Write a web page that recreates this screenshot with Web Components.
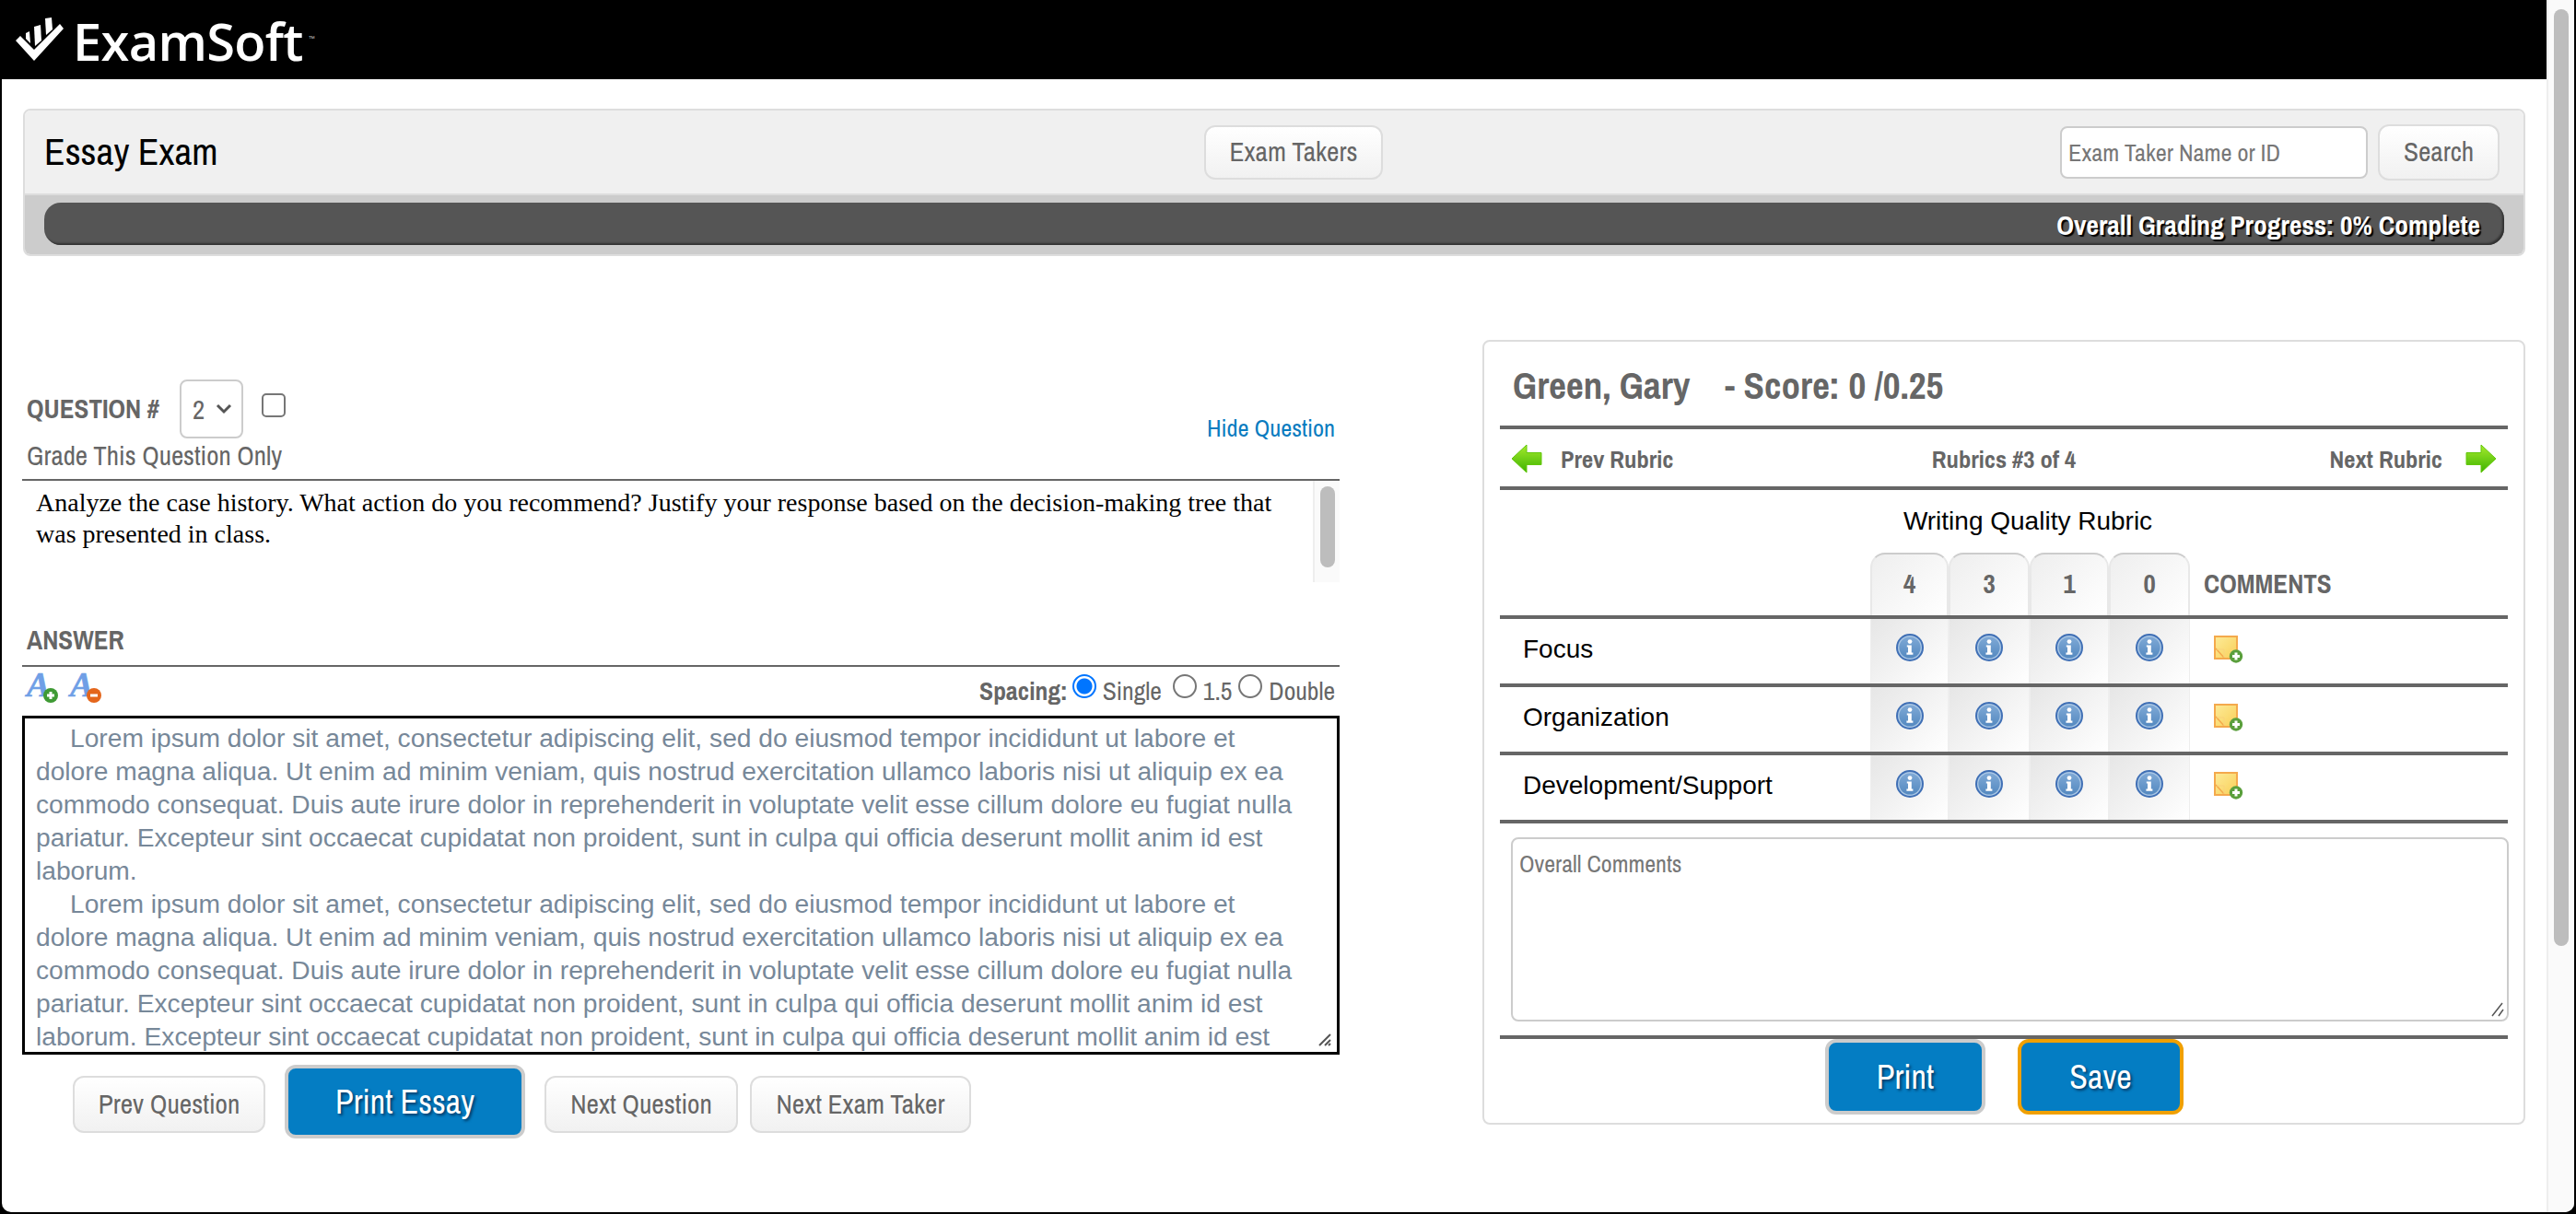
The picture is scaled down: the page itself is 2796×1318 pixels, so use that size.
<!DOCTYPE html>
<html>
<head>
<meta charset="utf-8">
<title>ExamSoft</title>
<style>
  :root {
    --narrow: "Archivo Narrow", "Liberation Sans", sans-serif;
    --sans: "Liberation Sans", Arial, sans-serif;
    --serif: "Liberation Serif", "Times New Roman", serif;
    --rule: #666;
  }
  html, body { margin: 0; padding: 0; overflow: hidden; background: #000; }
</style>
</head>
<body>
<es-app>
  <es-header></es-header>
  <es-exam-bar></es-exam-bar>
  <es-columns>
    <es-question slot="left"></es-question>
    <es-rubric slot="right"></es-rubric>
  </es-columns>
</es-app>

<script>
// small helper, every element here is the same shape
function define(name, css, html) {
  customElements.define(name, class extends HTMLElement {
    constructor() {
      super()
      const root = this.attachShadow({mode: 'open'})
      root.innerHTML = `<style>${css}</style>${typeof html == 'function' ? html(this) : html}`
    }
  })
}

const ICON_INFO = `
  <svg width="32" height="32" viewBox="0 0 32 32">
    <defs><linearGradient id="ib" x1="0" y1="0" x2="0" y2="1">
      <stop offset="0" stop-color="#7fa9d6"/><stop offset="1" stop-color="#5489c0"/>
    </linearGradient></defs>
    <circle cx="16" cy="16" r="15" fill="#3f6fb5"/>
    <circle cx="16" cy="16" r="13" fill="#a9c6e4"/>
    <circle cx="16" cy="16" r="11.6" fill="url(#ib)"/>
    <circle cx="16" cy="9.6" r="2.4" fill="#fff"/>
    <path d="M12.8 13.4h5v8.2h1.6v2.2h-7v-2.2h1.6v-6h-1.2z" fill="#fff"/>
  </svg>`

const ICON_NOTE = `
  <svg width="32" height="30" viewBox="0 0 32 30">
    <defs><linearGradient id="nb" x1="0" y1="0" x2="1" y2="1">
      <stop offset="0" stop-color="#fdeb98"/><stop offset="1" stop-color="#f8cf58"/>
    </linearGradient></defs>
    <rect x="1" y="1" width="24" height="24" fill="url(#nb)" stroke="#f4a94c" stroke-width="2"/>
    <path d="M2 14l9 10" fill="none" stroke="#f4a94c" stroke-width="1.5"/>
    <path d="M11 24v-9H3" fill="none" stroke="#f9d27a" stroke-width="1"/>
    <circle cx="24" cy="22.5" r="7.2" fill="#5a9f3c"/>
    <path d="M20 22.5h8M24 18.5v8" stroke="#fff" stroke-width="3"/>
  </svg>`

function arrowIcon(flip) {
  return `
  <svg width="34" height="32" viewBox="0 0 34 32" style="${flip ? 'transform:scaleX(-1)' : ''}">
    <defs><linearGradient id="ar" x1="0" y1="0" x2="0" y2="1">
      <stop offset="0" stop-color="#a6ea2c"/><stop offset="1" stop-color="#3db300"/>
    </linearGradient></defs>
    <path d="M1 16L17 1v8.5h16v13H17V31z" fill="url(#ar)" stroke="#62c70a" stroke-width="1"/>
  </svg>`
}

// oversized viewBox so the A keeps its whole line box, the spare part is empty
function fontIcon(badge, sign) {
  return `
  <svg width="44" height="48" viewBox="-5 -14 44 48">
    <text x="-2" y="24" font-family="Liberation Serif, serif" font-style="italic" font-weight="700"
      font-size="38" fill="#6f9fe6" stroke="#6f9fe6" stroke-width="0.6">A</text>
    <circle cx="24" cy="23" r="8" fill="${badge}"/>
    <path d="${sign}" stroke="#fff" stroke-width="3"/>
  </svg>`
}

define('es-app', `
  :host { display: block; width: 100vw; height: 100vh; box-sizing: border-box; padding: 0 2px 2px; background: #000; }
  .frame { display: flex; height: 100%; background: #fff; border-radius: 0 0 10px 10px; overflow: hidden; }
  .main { flex: 1; min-width: 0; }
`, `
  <div class="frame">
    <div class="main"><slot></slot></div>
    <es-scrollbar style="--track:30px;--thumb:16px;--top:10px;--len:1017px"></es-scrollbar>
  </div>
`)

define('es-scrollbar', `
  :host { display: block; flex: 0 0 var(--track); width: var(--track); box-sizing: border-box;
    background: #fafafa; border-left: 2px solid #eee; padding-top: var(--top); }
  div { width: var(--thumb); height: var(--len); margin-left: 6px; border-radius: 8px; background: #bdbdbd; }
`, `<div></div>`)

define('es-header', `
  :host { display: flex; align-items: center; height: 86px; background: #000; color: #fff; box-sizing: border-box; padding-left: 15px; }
  svg { display: block; flex: none; }
  span { font: 600 56px/86px "Open Sans", sans-serif; margin-left: 6px; letter-spacing: -0.7px; position: relative; top: 1px; }
  sup { font: 7px/1 "Liberation Sans", sans-serif; color: #ccc; margin: 0 0 0 6px; vertical-align: 22px; }
`, `
  <svg width="56" height="52" viewBox="17 18 56 52">
    <g fill="#fff">
      <path d="M17 45l5-5 15 15 28-28 4 5-32 35z"/>
      <path d="M28 37l4-2 1 13-5-5z"/>
      <path d="M37 30l7-2 1 17-7 6z"/>
      <path d="M49 21l7-1 1 13-7 6z"/>
    </g>
  </svg>
  <span>ExamSoft<sup>™</sup></span>
`)

define('es-button', `
  :host { display: inline-block; }
  button { display: block; box-sizing: border-box; width: var(--w); height: var(--h); padding: 0;
    font: 29.3px/1 var(--narrow); color: #666; cursor: pointer;
    background: linear-gradient(#fff, #f1f1f1); border: 2px solid #ddd; border-radius: 12px; }
  :host([primary]) button { background: #047dc3; border: 4px solid #ccc; color: #fff; font-size: 36px;
    text-shadow: 2px 2px 3px #023a66; border-radius: 12px; }
  :host([accent]) button { border-color: #f0a000; }
`, `<button><slot></slot></button>`)

define('es-exam-bar', `
  :host { display: block; margin: 32px 23px 0; height: 160px; box-sizing: border-box;
    border: 2px solid #ddd; border-radius: 8px; overflow: hidden; }
  .top { display: flex; align-items: center; height: 90px; background: #f0f0f0; border-bottom: 2px solid #ddd;
    padding: 0 26px 0 21px; }
  h1 { flex: 0 0 1259px; margin: 0; font: 400 41.4px/1 var(--narrow); color: #000; }
  .search { margin-left: auto; display: flex; align-items: center; gap: 11px; }
  .input { box-sizing: border-box; width: 334px; height: 57px; background: #fff; border: 2px solid #ccc; border-radius: 8px;
    font: 26.3px/53px var(--narrow); color: #777; padding-left: 7px; }
  .bottom { background: #ccc; height: 64px; box-sizing: border-box; padding: 8px 21px 10px; }
  .bar { height: 46px; box-sizing: border-box; border-radius: 18px; background: #555; box-shadow: inset -2px -2px 2px #333;
    font: 700 29.5px/48px var(--narrow); color: #fff; text-align: right; padding-right: 26px; text-shadow: 2px 2px 1px #000; }
`, `
  <div class="top">
    <h1>Essay Exam</h1>
    <es-button style="--w:194px;--h:59px">Exam Takers</es-button>
    <div class="search">
      <div class="input">Exam Taker Name or ID</div>
      <es-button style="--w:132px;--h:61px">Search</es-button>
    </div>
  </div>
  <div class="bottom"><div class="bar">Overall Grading Progress: 0% Complete</div></div>
`)

define('es-columns', `
  :host { display: flex; justify-content: space-between; align-items: flex-start; padding: 0 23px 0 22px; }
`, `<slot name="left"></slot><slot name="right"></slot>`)

const LOREM = 'Lorem ipsum dolor sit amet, consectetur adipiscing elit, sed do eiusmod tempor incididunt ut labore et dolore magna aliqua. Ut enim ad minim veniam, quis nostrud exercitation ullamco laboris nisi ut aliquip ex ea commodo consequat. Duis aute irure dolor in reprehenderit in voluptate velit esse cillum dolore eu fugiat nulla pariatur. Excepteur sint occaecat cupidatat non proident, sunt in culpa qui officia deserunt mollit anim id est laborum.'

define('es-question', `
  :host { display: block; width: 1430px; margin-top: 134px; color: #666; font: 29px/1 var(--narrow); }
  .head { display: flex; justify-content: space-between; align-items: flex-start; height: 108px; padding: 0 5px;
    border-bottom: 2px solid var(--rule); box-sizing: content-box; }
  .q { display: flex; align-items: flex-start; }
  b { font-weight: 700; }
  .q b { line-height: 64px; margin-right: 22px; }
  .select { display: flex; align-items: center; box-sizing: border-box; width: 69px; height: 64px; border: 2px solid #ccc;
    border-radius: 8px; padding-left: 12px; gap: 12px; }
  .check { appearance: none; margin: 15px 0 0 20px; width: 26px; height: 26px; border: 2px solid #767676; border-radius: 5px; background: #fff; }
  .only { margin-top: 2px; height: 34px; line-height: 34px; }
  a { color: #0a7cc0; font-size: 26.3px; margin-top: 40px; }
  .prompt { display: flex; height: 110px; }
  .prompt p { flex: 1; margin: 0; padding: 7px 40px 0 15px; font: 28px/34px var(--serif); color: #000; }
  .label { height: 90px; box-sizing: content-box; display: flex; align-items: flex-end; padding-left: 5px; border-bottom: 2px solid var(--rule); }
  .label b { padding-bottom: 13px; }
  .tools { display: flex; justify-content: space-between; align-items: flex-start; height: 53px; padding: 8px 5px 0 2px; box-sizing: border-box; }
  .tools .icons { display: flex; gap: 3px; margin-top: -14px; height: 48px; }
  .spacing { display: flex; align-items: flex-start; line-height: 36px; font-size: 27.6px; }
  .spacing b { margin-right: 5px; }
  .spacing input { appearance: none; margin: 0 7px 0 0; width: 26px; height: 26px; border-radius: 50%; border: 2px solid #767676; background: #fff; }
  .spacing input:checked { border-color: #0075ff; background: radial-gradient(circle, #0075ff 0 8px, #fff 9px); }
  .spacing span { margin-right: 12px; }
  .spacing span.mid { margin-right: 7px; }
  .spacing span:last-child { margin-right: 0; }
  .answer { position: relative; box-sizing: border-box; height: 368px; border: 3px solid #000; padding: 3px 30px 0 12px; overflow: hidden;
    font: 28.2px/36px var(--sans); color: #778899; }
  .answer p { margin: 0; text-indent: 37px; }
  .grip { position: absolute; right: 4px; bottom: 4px; background: #fff; }
  .buttons { display: flex; align-items: flex-start; margin-top: 11px; padding-left: 55px; }
  .buttons es-button { margin-top: 12px; }
  .buttons es-button[primary] { margin: 0 21px; }
  .buttons es-button:last-child { margin-left: 13px; }
`, `
  <div class="head">
    <div>
      <div class="q">
        <b>QUESTION #</b>
        <div class="select"><span>2</span>
          <svg width="18" height="12" viewBox="0 0 18 12"><path d="M2 2l7 7 7-7" fill="none" stroke="#555" stroke-width="3"/></svg>
        </div>
        <input class="check" type="checkbox">
      </div>
      <div class="only">Grade This Question Only</div>
    </div>
    <a>Hide Question</a>
  </div>
  <div class="prompt">
    <p>Analyze the case history. What action do you recommend? Justify your response based on the decision-making tree that was presented in class.</p>
    <es-scrollbar style="--track:29px;--thumb:16px;--top:6px;--len:88px"></es-scrollbar>
  </div>
  <div class="label"><b>ANSWER</b></div>
  <div class="tools">
    <div class="icons">
      ${fontIcon('#3f9a34', 'M20 23h8M24 19v8')}
      ${fontIcon('#e4661c', 'M20 23h8')}
    </div>
    <div class="spacing">
      <b>Spacing:</b>
      <input type="radio" name="sp" checked><span>Single</span>
      <input type="radio" name="sp"><span class="mid">1.5</span>
      <input type="radio" name="sp"><span>Double</span>
    </div>
  </div>
  <div class="answer">
    <p>${LOREM}</p>
    <p>${LOREM} Excepteur sint occaecat cupidatat non proident, sunt in culpa qui officia deserunt mollit anim id est laborum.</p>
    <svg class="grip" width="18" height="18" viewBox="0 0 18 18"><path d="M3 15L15 3M9 15l6-6" stroke="#555" stroke-width="2" fill="none"/><path d="M13 15l2-2" stroke="#555" stroke-width="2"/></svg>
  </div>
  <div class="buttons">
    <es-button style="--w:209px;--h:62px">Prev Question</es-button>
    <es-button primary style="--w:261px;--h:80px">Print Essay</es-button>
    <es-button style="--w:210px;--h:62px">Next Question</es-button>
    <es-button style="--w:240px;--h:62px">Next Exam Taker</es-button>
  </div>
`)

define('es-rubric-row', `
  :host { display: grid; grid-template-columns: 402px 85px 88px 86px 88px 1fr; height: 70px; border-bottom: 4px solid var(--rule); }
  :host([head]) { height: 68px; }
  .name { font: 28px/1 var(--sans); color: #000; padding: 19px 0 0 25px; }
  .cell { display: flex; justify-content: center; padding-top: 15px; box-sizing: border-box;
    background: linear-gradient(135deg, #e6e6e6, #fff); border-left: 1px solid #eee; border-right: 1px solid #eee; }
  .note { padding: 18px 0 0 26px; }
  svg { display: block; }
  :host([head]) .cell { border-radius: 16px 16px 0 0; border-top: 2px solid #ccc; border-left: 2px solid #e8e8e8; border-right: 2px solid #e8e8e8;
    background: linear-gradient(135deg, #eee, #fff); font: 700 29px/1 var(--narrow); color: #666; padding-top: 17px; }
  .title { font: 700 29px/1 var(--narrow); color: #666; padding: 19px 0 0 15px; }
`, el => {
  const scores = el.getAttribute('scores')
  if (scores) {
    return '<div></div>' + scores.split(',').map(s => `<div class="cell">${s}</div>`).join('') + '<div class="title">COMMENTS</div>'
  }
  return `<div class="name"><slot></slot></div>` + `<div class="cell">${ICON_INFO}</div>`.repeat(4) + `<div class="note">${ICON_NOTE}</div>`
})

define('es-rubric', `
  :host { display: block; width: 1132px; height: 852px; margin-top: 91px; box-sizing: border-box; border: 2px solid #ddd; border-radius: 8px;
    padding: 0 17px; color: #666; font: 700 26.6px/1 var(--narrow); }
  .name { height: 91px; border-bottom: 4px solid var(--rule); box-sizing: content-box; font-size: 41px; line-height: 60px; padding-left: 14px; white-space: pre; }
  .name span { display: block; padding-top: 18px; }
  .nav { display: grid; grid-template-columns: 1fr auto 1fr; align-items: center; border-bottom: 4px solid var(--rule); padding: 2px 12px 0; box-sizing: border-box; height: 66px; }
  .nav div { display: flex; align-items: center; gap: 20px; }
  .nav div:last-child { justify-content: flex-end; gap: 25px; }
  h2 { margin: 0; height: 68px; box-sizing: border-box; padding: 20px 0 0 52px; text-align: center; font: 400 28px/1 var(--sans); color: #000; }
  .overall { position: relative; box-sizing: border-box; margin: 15px 0 0 12px; width: 1083px; height: 200px; border: 2px solid #ccc; border-radius: 8px;
    font: 400 26px/1 var(--narrow); color: #777; padding: 14px 7px; }
  .overall svg { position: absolute; right: 2px; bottom: 2px; }
  hr { margin: 15px 0 0; border: 0; height: 4px; background: var(--rule); }
  .actions { display: flex; gap: 35px; padding-left: 353px; }
`, `
  <div class="name"><span>Green, Gary    - Score: 0 /0.25</span></div>
  <div class="nav">
    <div>${arrowIcon(false)}<span>Prev Rubric</span></div>
    <span>Rubrics #3 of 4</span>
    <div><span>Next Rubric</span>${arrowIcon(true)}</div>
  </div>
  <h2>Writing Quality Rubric</h2>
  <es-rubric-row head scores="4,3,1,0"></es-rubric-row>
  <es-rubric-row>Focus</es-rubric-row>
  <es-rubric-row>Organization</es-rubric-row>
  <es-rubric-row>Development/Support</es-rubric-row>
  <div class="overall">Overall Comments
    <svg width="16" height="18" viewBox="0 0 16 18"><path d="M2 16L13 2M9 16l5-7" stroke="#555" stroke-width="1.5" fill="none"/></svg>
  </div>
  <hr>
  <div class="actions">
    <es-button primary style="--w:174px;--h:82px">Print</es-button>
    <es-button primary accent style="--w:180px;--h:82px">Save</es-button>
  </div>
`)
</script>
</body>
</html>
